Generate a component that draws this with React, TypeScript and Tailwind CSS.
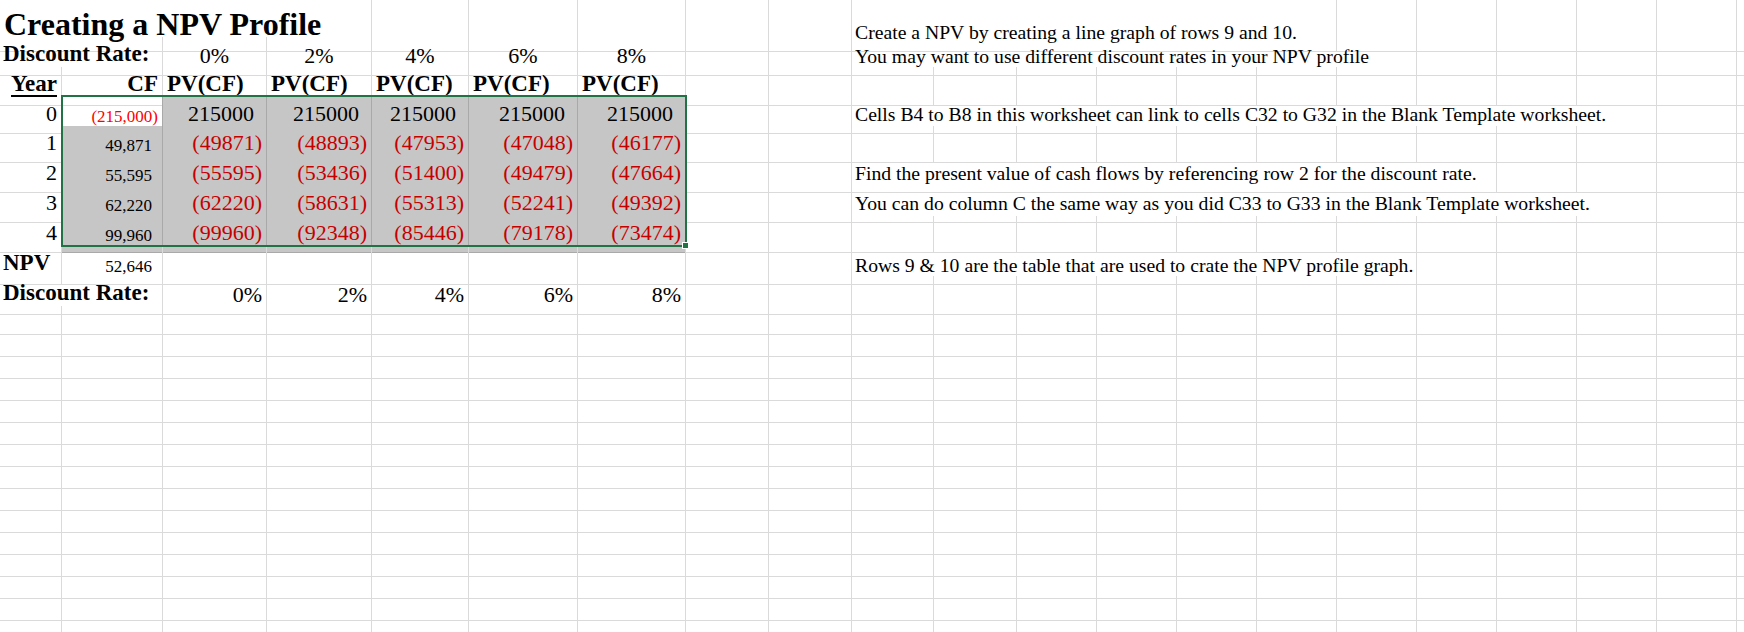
import React from "react"
import { twMerge } from "tailwind-merge"

type Cell = { span?: number; v?: React.ReactNode; c?: string }

const grid =
  "grid grid-cols-[62px_101px_104px_105px_97px_109px_108px_83px_83px_82px_83px_80px_80px_80px_80px_80px_80px_80px_80px_80px_80px]"

const spans: Record<number, string> = {
  1: "",
  2: "col-span-2",
  4: "col-span-4",
  6: "col-span-6",
  7: "col-span-7",
  8: "col-span-8",
  10: "col-span-10",
}

// common cell looks
const bold = "text-[23px] font-bold"
const num = "text-[22px] justify-end"
const small = "text-[17px] justify-end pb-[4px]"
const gray = "bg-[#c6c6c6] border-[#a9a9a9]"
const note = "text-[19.7px] pl-[3px]"
const head = "underline decoration-2 underline-offset-[4px]"

function Row({ h, cells }: { h: string; cells: Cell[] }) {
  const used = cells.reduce((n, c) => n + (c.span ?? 1), 0)
  const all: Cell[] = [...cells, ...Array.from({ length: 21 - used }, () => ({}))]
  return (
    <div className={`${grid} ${h}`}>
      {all.map((c, i) => (
        <div
          key={i}
          className={twMerge(
            "flex items-end whitespace-nowrap border-b border-r border-[#dadada] pb-[3px] leading-none",
            spans[c.span ?? 1],
            c.c
          )}
        >
          {c.v}
        </div>
      ))}
    </div>
  )
}

const cf = ["(215,000)", "49,871", "55,595", "62,220", "99,960"]
const pv = [
  ["215000", "215000", "215000", "215000", "215000"],
  ["(49871)", "(48893)", "(47953)", "(47048)", "(46177)"],
  ["(55595)", "(53436)", "(51400)", "(49479)", "(47664)"],
  ["(62220)", "(58631)", "(55313)", "(52241)", "(49392)"],
  ["(99960)", "(92348)", "(85446)", "(79178)", "(73474)"],
]
const notes: Record<number, Cell> = {
  0: { span: 10, v: "Cells B4 to B8 in this worksheet can link to cells C32 to G32 in the Blank Template worksheet.", c: note },
  2: { span: 8, v: "Find the present value of cash flows by referencing row 2 for the discount rate.", c: note },
  3: { span: 10, v: "You can do column C the same way as you did C33 to G33 in the Blank Template worksheet.", c: note },
}
const rates = ["0%", "2%", "4%", "6%", "8%"]

export default function App() {
  return (
    <div className="relative h-[632px] w-[1744px] overflow-hidden bg-white font-['Liberation_Serif','Times_New_Roman',serif] text-black">
      <Row
        h="h-[37px]"
        cells={[
          { span: 4, v: "Creating a NPV Profile", c: "text-[32px] font-bold pl-[4px] pb-[3px]" },
          {}, {}, {}, {}, {},
          { span: 6, v: "Create a NPV by creating a line graph of rows 9 and 10.", c: note },
        ]}
      />
      <Row
        h="h-[30px]"
        cells={[
          { span: 2, v: "Discount Rate:", c: `${bold} pl-[3px]` },
          ...rates.map((r) => ({ v: r, c: "text-[22px] justify-center" })),
          {}, {},
          { span: 7, v: "You may want to use different discount rates in your NPV profile", c: note },
        ]}
      />
      <Row
        h="h-[30px]"
        cells={[
          { v: <span className={head}>Year</span>, c: `${bold} justify-end pr-[4px]` },
          { v: <span className={head}>CF</span>, c: `${bold} justify-end pr-[4px]` },
          ...rates.map(() => ({ v: <span className={head}>PV(CF)</span>, c: `${bold} pl-[4px]` })),
        ]}
      />
      {pv.map((row, i) => (
        <Row
          key={i}
          h={i === 0 ? "h-[29px]" : "h-[30px]"}
          cells={[
            { v: String(i), c: `${num} pr-[4px]` },
            i === 0
              ? { v: cf[i], c: `${small} pr-[4px] text-[#ff0000] border-[#a9a9a9]` }
              : { v: cf[i], c: `${small} pr-[10px] ${gray}` },
            ...row.map((v) => ({
              v,
              c: `${num} ${gray} ${v.startsWith("(") ? "pr-[4px] text-[#c60000]" : "pr-[12px]"}`,
            })),
            {}, {},
            ...(notes[i] ? [notes[i]] : []),
          ]}
        />
      ))}
      <Row
        h="h-[30px]"
        cells={[
          { v: "NPV", c: `${bold} pl-[3px]` },
          { v: "52,646", c: `${small} pr-[10px]` },
          {}, {}, {}, {}, {}, {}, {},
          { span: 7, v: "Rows 9 & 10 are the table that are used to crate the NPV profile graph.", c: note },
        ]}
      />
      <Row
        h="h-[30px]"
        cells={[
          { span: 2, v: "Discount Rate:", c: `${bold} pl-[3px]` },
          ...rates.map((r) => ({ v: r, c: `${num} pr-[4px]` })),
        ]}
      />
      <Row h="h-[29px]" cells={[]} />
      {Array.from({ length: 14 }, (_, i) => (
        <Row key={i} h="h-[22px]" cells={[]} />
      ))}

      {/* selection box B4:G8 */}
      <div className="pointer-events-none absolute left-[61px] top-[95px] h-[152px] w-[626px] border-2 border-[#217346]">
        <div className="absolute -bottom-[4px] -right-[4px] h-[7px] w-[7px] border border-white bg-[#217346]" />
      </div>
    </div>
  )
}
